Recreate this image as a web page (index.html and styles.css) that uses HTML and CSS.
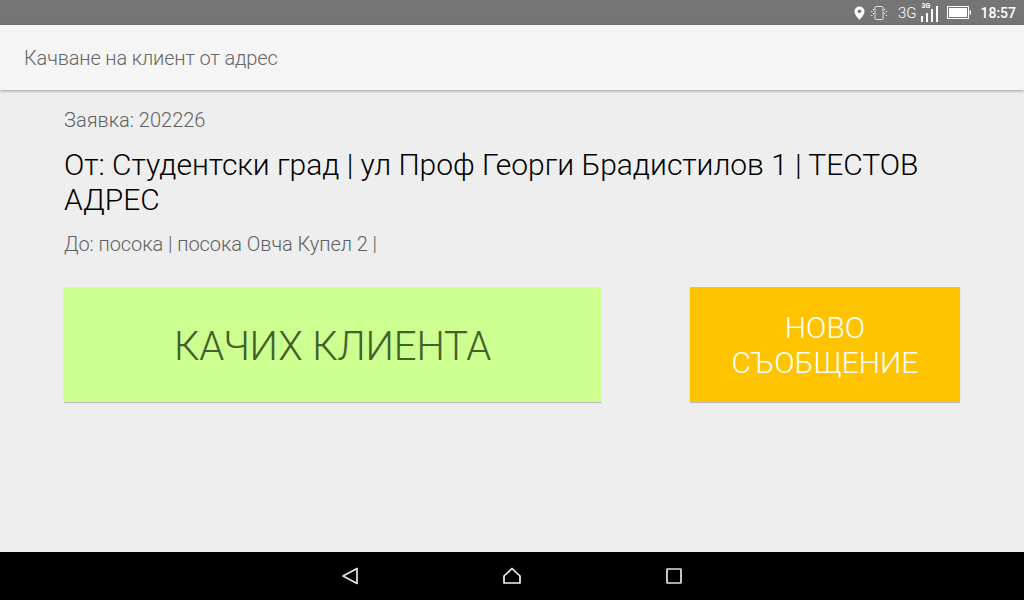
FILE: index.html
```html
<!DOCTYPE html>
<html lang="bg">
<head>
  <meta charset="UTF-8">
  <title>Качване на клиент от адрес</title>
  <link rel="stylesheet" href="styles.css">
</head>
<body>
  <div class="status-bar">
    <svg class="icon-pin" width="11" height="14" viewBox="0 0 11 14"><path d="M5.500 0.500a5 5 0 0 0-5 5c0 3.600 5 8.200 5 8.200s5-4.600 5-8.200a5 5 0 0 0-5-5z" fill="#fff"/><circle cx="5.500" cy="5.300" r="1.800" fill="#757575"/></svg>
    <svg class="icon-vibrate" width="16" height="14" viewBox="0 0 16 14" fill="none" stroke="#fff"><rect x="4" y="0.500" width="8" height="13" rx="1" stroke-opacity=".75"/><path d="M2.500 3v1M0.800 5v1M2.500 7v1M0.800 9v1M13.500 3v1M15.200 5v1M13.500 7v1M15.200 9v1" stroke-width="1.200"/></svg>
    <span class="net-label">3G</span>
    <div class="signal">
      <span class="signal-label">3G</span>
      <svg width="18" height="20" viewBox="0 0 18 20" fill="#fff"><rect x="0" y="13" width="2" height="6"/><rect x="5" y="10" width="2" height="9"/><rect x="10" y="6" width="2" height="13"/><rect x="15" y="3" width="2" height="16"/></svg>
    </div>
    <svg class="icon-battery" width="24" height="13" viewBox="0 0 24 13"><rect x="0.500" y="0.500" width="21" height="12" fill="none" stroke="#fff"/><rect x="2" y="2" width="18" height="9" fill="#fff"/><rect x="22.500" y="4.500" width="1.500" height="4" fill="#fff"/></svg>
    <span class="clock">18:57</span>
  </div>

  <div class="toolbar">Качване на клиент от адрес</div>

  <div class="content">
    <div class="order-no">Заявка: 202226</div>
    <div class="from">От: Студентски град | ул Проф Георги Брадистилов 1 | ТЕСТОВ АДРЕС</div>
    <div class="to">До: посока | посока Овча Купел 2 |</div>
    <div class="actions">
      <div class="btn btn-pickup">КАЧИХ КЛИЕНТА</div>
      <div class="btn btn-message">НОВО СЪОБЩЕНИЕ</div>
    </div>
  </div>

  <div class="nav-bar">
    <svg width="18" height="18" viewBox="0 0 18 18" fill="none" stroke="#e4e4e4" stroke-width="1.700" stroke-linejoin="round"><path d="M17 1.500v15L3 9z"/></svg>
    <svg width="20" height="18" viewBox="0 0 20 18" fill="none" stroke="#f2f2f2" stroke-width="1.700" stroke-linejoin="round"><path d="M10 1.500L2 9v7h16V9z"/></svg>
    <svg width="16" height="16" viewBox="0 0 16 16" fill="none" stroke="#e4e4e4" stroke-width="1.700" stroke-linejoin="round"><rect x="1" y="1" width="14" height="14" rx="0.500"/></svg>
  </div>
</body>
</html>
```

FILE: styles.css
```css
* {
  margin: 0;
  padding: 0;
  box-sizing: border-box;
}

body {
  width: 1024px;
  height: 600px;
  display: flex;
  flex-direction: column;
  overflow: hidden;
  background-color: #eeeeee;
  font-family: Roboto, "Noto Sans", sans-serif;
}

.status-bar {
  height: 25px;
  display: flex;
  align-items: center;
  justify-content: flex-end;
  padding-right: 8px;
  background-color: #757575;
  color: #fff;
}

.icon-pin {
  margin-right: 6px;
}

.icon-vibrate {
  margin-right: 11px;
}

.net-label {
  font-size: 15px;
  font-weight: 300;
  margin-right: 5px;
}

.signal {
  position: relative;
  width: 18px;
  height: 20px;
  margin-right: 8px;
}

.signal-label {
  position: absolute;
  top: -1px;
  left: 0;
  font-size: 7px;
  font-weight: 700;
}

.icon-battery {
  margin-right: 9px;
}

.clock {
  font-size: 14px;
  font-weight: 500;
}

.toolbar {
  height: 65px;
  display: flex;
  align-items: center;
  padding-left: 24px;
  background-color: #f5f5f5;
  color: #666666;
  font-size: 20px;
  font-weight: 300;
  letter-spacing: -0.15px;
  box-shadow: 0 1px 3px rgba(0, 0, 0, 0.35);
}

.content {
  flex: 1;
  padding: 18px 64px 0;
}

.order-no {
  font-size: 20px;
  font-weight: 300;
  line-height: 24px;
  color: #616161;
}

.from {
  margin-top: 15px;
  font-size: 30px;
  font-weight: 300;
  letter-spacing: -0.03px;
  line-height: 35px;
  color: #000;
}

.to {
  margin-top: 15px;
  font-size: 20px;
  font-weight: 300;
  letter-spacing: -0.06px;
  line-height: 24px;
  color: #616161;
}

.actions {
  display: flex;
  justify-content: space-between;
  margin-top: 31px;
}

.btn {
  height: 115px;
  display: flex;
  align-items: center;
  justify-content: center;
  text-align: center;
  font-weight: 300;
  box-shadow: 0 1px 1px rgba(0, 0, 0, 0.2);
}

.btn-pickup {
  width: 537px;
  padding-top: 3px;
  background-color: #ccff90;
  color: #44612a;
  font-size: 40px;
  letter-spacing: -0.15px;
}

.btn-message {
  width: 270px;
  padding: 0 30px;
  background-color: #ffc400;
  color: #fff;
  font-size: 30px;
  line-height: 35px;
}

.nav-bar {
  height: 48px;
  display: flex;
  align-items: center;
  justify-content: center;
  gap: 144px;
  padding-right: 2px;
  background-color: #000;
}
```
